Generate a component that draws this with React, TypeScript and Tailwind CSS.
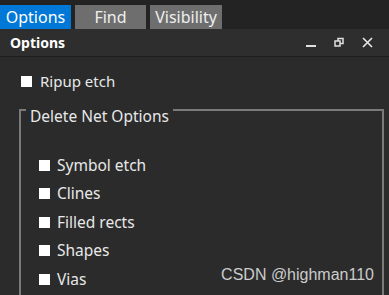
import React from "react";

const font = { fontFamily: '"Noto Sans", "Open Sans", sans-serif' };

function Box() {
  return <div className="w-[11px] h-[11px] bg-white shrink-0" />;
}

function Item({ label }: { label: string }) {
  return (
    <div className="flex items-center h-[28.5px] gap-[7px]">
      <Box />
      <span className="text-[15.5px] text-[#e8e8e8] leading-none">{label}</span>
    </div>
  );
}

export default function App() {
  return (
    <div className="w-[389px] h-[295px] overflow-hidden bg-[#2b2b2b] flex flex-col" style={font}>
      <div className="h-[29px] bg-[#232323] flex items-end gap-[4px] shrink-0">
        <div className="w-[71px] h-[24px] bg-[#0078d7] text-white text-[16px] leading-none flex items-center justify-center">Options</div>
        <div className="w-[71px] h-[24px] bg-[#6e6e6e] text-[#eeeeee] text-[16px] leading-none flex items-center justify-center">Find</div>
        <div className="w-[72px] h-[24px] bg-[#6e6e6e] text-[#eeeeee] text-[16px] leading-none flex items-center justify-center">Visibility</div>
      </div>
      <div className="h-[28px] bg-[#2e2e2e] border-b border-[#1e1e1e] flex items-center pl-[10px] pr-[16px] shrink-0">
        <span className="text-white text-[14px] font-bold leading-none">Options</span>
        <div className="ml-auto flex items-center gap-[17px]">
          <svg width="11" height="11" viewBox="0 0 11 11"><rect x="0" y="8" width="10" height="2" fill="#e0e0e0" /></svg>
          <svg width="11" height="11" viewBox="0 0 11 11" fill="none" stroke="#e0e0e0" strokeWidth="1.5">
            <rect x="1" y="4" width="5" height="5" />
            <path d="M4 4V1.5h5v5H6" />
          </svg>
          <svg width="11" height="11" viewBox="0 0 11 11" stroke="#e8e8e8" strokeWidth="1.6"><path d="M1 1l9 9M10 1l-9 9" /></svg>
        </div>
      </div>
      <div className="flex-1 pl-[19px] pr-[5px] pt-[15px] flex flex-col">
        <div className="flex items-center gap-[8px] pl-[2px] h-[18px]">
          <Box />
          <span className="text-[15px] text-[#e8e8e8] leading-none">Ripup etch</span>
        </div>
        <div className="relative mt-[19px] flex-1 border-l-2 border-t-2 border-r-2 border-[#7a7a7a] pl-[18px] pt-[40px]">
          <div className="absolute left-[5px] top-[-3px] bg-[#2b2b2b] px-[4px] pt-[1px] text-[15.5px] text-[#e8e8e8] leading-none">Delete Net Options</div>
          <Item label="Symbol etch" />
          <Item label="Clines" />
          <Item label="Filled rects" />
          <Item label="Shapes" />
          <Item label="Vias" />
          <div className="absolute right-[8px] bottom-[12px] text-[16px] text-[#cccccc] leading-none" style={{ fontFamily: '"Liberation Sans", Arial, sans-serif' }}>CSDN @highman110</div>
        </div>
      </div>
    </div>
  );
}
